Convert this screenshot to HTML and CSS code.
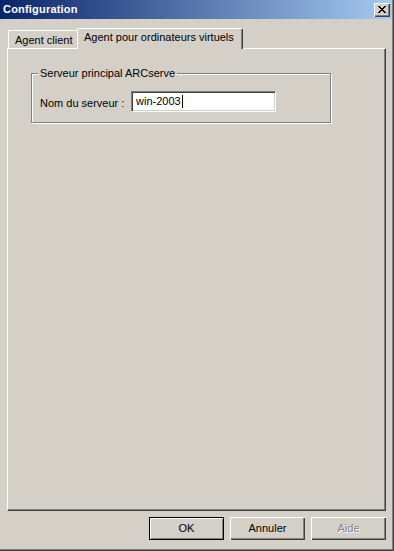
FILE: index.html
```html
<!DOCTYPE html>
<html lang="fr">
<head>
<meta charset="utf-8">
<title>Configuration</title>
<link rel="stylesheet" href="styles.css">
</head>
<body>
<div class="window">
  <div class="titlebar">
    <span class="title">Configuration</span>
    <span class="close"><svg width="8" height="7" viewBox="0 0 8 7" shape-rendering="crispEdges"><path fill="#000" d="M0 0h2v1H0z M6 0h2v1H6z M1 1h2v1H1z M5 1h2v1H5z M2 2h4v1H2z M3 3h2v1H3z M2 4h4v1H2z M1 5h2v1H1z M5 5h2v1H5z M0 6h2v1H0z M6 6h2v1H6z"/></svg></span>
  </div>
  <div class="client">
    <div class="tabs">
      <div class="tab">Agent client</div>
      <div class="tab active">Agent pour ordinateurs virtuels</div>
    </div>
    <div class="panel">
      <fieldset class="group">
        <legend>Serveur principal ARCserve</legend>
        <div class="row">
          <span class="label">Nom du serveur :</span>
          <span class="edit">win-2003<span class="caret"></span></span>
        </div>
      </fieldset>
    </div>
    <div class="buttons">
      <span class="btn default"><span class="btn-in">OK</span></span>
      <span class="btn"><span class="btn-in">Annuler</span></span>
      <span class="btn disabled"><span class="btn-in">Aide</span></span>
    </div>
  </div>
</div>
</body>
</html>
```
FILE: styles.css
```css
html, body {
  margin: 0;
  padding: 0;
  background: #d4d0c8;
}
body {
  font-family: "Liberation Sans", Arial, sans-serif;
  font-size: 11px;
  line-height: 13px;
  color: #000;
}
.window {
  width: 394px;
  height: 551px;
  box-sizing: border-box;
  background: #d4d0c8;
  box-shadow: inset -1px -1px #404040, inset -2px -2px #808080;
  display: flex;
  flex-direction: column;
}
.titlebar {
  height: 19px;
  margin-right: 2px;
  padding: 0 2px 0 3px;
  background: linear-gradient(to right, #0a246a, #a6caf0);
  display: flex;
  align-items: center;
  justify-content: space-between;
}
.title {
  color: #fff;
  font-weight: bold;
  letter-spacing: 0.2px;
}
.close {
  width: 16px;
  height: 14px;
  box-sizing: border-box;
  background: #d4d0c8;
  box-shadow: inset 1px 1px #fff, inset -1px -1px #404040, inset -2px -2px #808080;
  display: flex;
  align-items: center;
  justify-content: center;
  padding: 0 0 1px 0;
}
.client {
  padding: 9px 8px 0 7px;
  display: flex;
  flex-direction: column;
}
.tabs {
  height: 20px;
  display: flex;
  align-items: flex-end;
  padding-left: 1px;
}
.tab {
  box-sizing: border-box;
  height: 18px;
  width: 69px;
  padding: 3px 0 0 6px;
  border-top: 1px solid #fff;
  border-left: 1px solid #fff;
  border-top-left-radius: 2px;
  white-space: nowrap;
}
.tab.active {
  position: relative;
  z-index: 1;
  width: 166px;
  height: 21px;
  margin-bottom: -1px;
  padding: 2px 0 0 6px;
  background: #d4d0c8;
  border-right: 1px solid #404040;
  border-top-right-radius: 2px;
  box-shadow: inset -1px 0 #808080;
}
.panel {
  box-sizing: border-box;
  height: 463px;
  border-top: 1px solid #fff;
  border-left: 1px solid #fff;
  border-right: 1px solid #404040;
  border-bottom: 1px solid #404040;
  box-shadow: inset -1px -1px #808080;
  padding: 18px 0 0 23px;
}
.group {
  box-sizing: border-box;
  width: 300px;
  margin: 0;
  padding: 0 0 10px 0;
  border: 1px solid #808080;
  box-shadow: inset 1px 1px #fff, 1px 1px #fff;
  min-inline-size: 0;
}
.group legend {
  margin-left: 6px;
  padding: 0 2px;
  background: #d4d0c8;
  line-height: 13px;
}
.row {
  display: flex;
  align-items: flex-start;
  padding: 11px 0 0 8px;
}
.label {
  flex: 0 0 91px;
  margin-top: 6px;
  white-space: nowrap;
}
.edit {
  box-sizing: border-box;
  width: 145px;
  height: 21px;
  padding: 3px 0 0 4px;
  background: #fff;
  border-top: 1px solid #808080;
  border-left: 1px solid #808080;
  border-right: 1px solid #fff;
  border-bottom: 1px solid #fff;
  box-shadow: inset 1px 1px #404040, inset -1px -1px #d4d0c8;
  display: flex;
  align-items: flex-start;
}
.caret {
  display: inline-block;
  width: 1px;
  height: 13px;
  background: #000;
  margin-left: 1px;
}
.buttons {
  margin-top: 6px;
  display: flex;
  justify-content: flex-end;
  gap: 6px;
}
.btn {
  box-sizing: border-box;
  width: 75px;
  height: 23px;
  background: #d4d0c8;
  box-shadow: inset 1px 1px #fff, inset -1px -1px #404040, inset -2px -2px #808080;
  display: flex;
}
.btn-in {
  flex: 1;
  display: flex;
  align-items: center;
  justify-content: center;
}
.btn.default {
  border: 1px solid #000;
  box-shadow: none;
}
.btn.default .btn-in {
  box-shadow: inset 1px 1px #fff, inset -1px -1px #808080;
}
.btn.disabled {
  color: #808080;
  text-shadow: 1px 1px #fff;
}
```
